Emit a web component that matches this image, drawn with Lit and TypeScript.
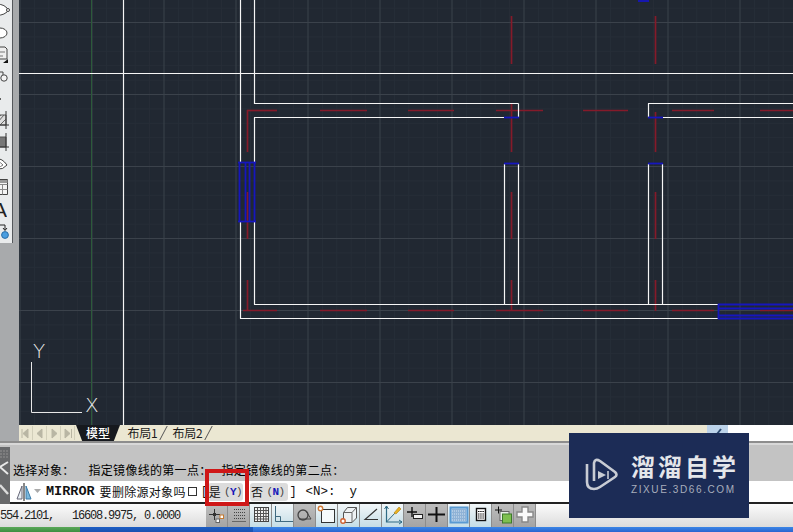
import { LitElement, css, html, svg } from 'lit'
import { customElement } from 'lit/decorators.js'

const WIDTH = 774
const HEIGHT = 425
const OX = 19 // canvas starts here in page coordinates

type Seg = [number, number, number, number]

// all in page coordinates, shifted by OX when drawn
const WHITE: Seg[] = [
  [19, 73.5, 793, 73.5],
  [123.5, 0, 123.5, 425],
  [240.5, 0, 240.5, 162],
  [240.5, 221, 240.5, 318.5],
  [254.5, 0, 254.5, 104],
  [254.5, 117.5, 254.5, 162],
  [254.5, 221, 254.5, 304.5],
  [254, 103.5, 518.5, 103.5],
  [254, 117.5, 504, 117.5],
  [518.5, 103.5, 518.5, 117.5],
  [504.5, 164, 504.5, 304.5],
  [518.5, 164, 518.5, 304.5],
  [648.5, 164, 648.5, 304.5],
  [662.5, 164, 662.5, 304.5],
  [648.5, 103.5, 648.5, 117.5],
  [648, 103.5, 793, 103.5],
  [663, 117.5, 793, 117.5],
  [254, 304.5, 718, 304.5],
  [240, 318.5, 718, 318.5],
]

const BLUE: Seg[] = [
  [239.5, 162, 239.5, 221],
  [245.5, 162, 245.5, 221],
  [249.5, 162, 249.5, 221],
  [254.5, 162, 254.5, 221],
  [238, 162.5, 256, 162.5],
  [238, 221.5, 256, 221.5],
  [504, 117.5, 519, 117.5],
  [504, 163.5, 519, 163.5],
  [648, 117.5, 663, 117.5],
  [648, 163.5, 663, 163.5],
  [638, 1, 649, 1],
  [718.5, 304, 718.5, 319],
  [718, 304.5, 793, 304.5],
  [718, 308.5, 793, 308.5],
  [718, 315.5, 793, 315.5],
  [718, 318.5, 793, 318.5],
]

const RED: Seg[] = [
  [511.5, 16, 511.5, 64],
  [655.5, 16, 655.5, 64],
  [511.5, 104, 511.5, 152],
  [655.5, 112, 655.5, 152],
  [511.5, 192, 511.5, 239],
  [655.5, 192, 655.5, 239],
  [511.5, 280, 511.5, 311],
  [655.5, 280, 655.5, 311],
  [247.5, 110, 247.5, 152],
  [247.5, 192, 247.5, 239],
  [247.5, 280, 247.5, 311],
  [247, 110.5, 277, 110.5],
  [320, 110.5, 367, 110.5],
  [408, 110.5, 454, 110.5],
  [496, 110.5, 543, 110.5],
  [583, 110.5, 628, 110.5],
  [672, 110.5, 714, 110.5],
  [760, 110.5, 793, 110.5],
  [243, 310.5, 277, 310.5],
  [320, 310.5, 367, 310.5],
  [408, 310.5, 454, 310.5],
  [496, 310.5, 543, 310.5],
  [583, 310.5, 628, 310.5],
  [672, 310.5, 714, 310.5],
  [760, 310.5, 793, 310.5],
]

const lines = (segs: Seg[], color: string, width = 1) =>
  segs.map(
    ([x1, y1, x2, y2]) =>
      svg`<line x1=${x1 - OX} y1=${y1} x2=${x2 - OX} y2=${y2} stroke=${color} stroke-width=${width} />`
  )

function gridLines() {
  const minor: Seg[] = []
  const major: Seg[] = []
  for (let i = -1; i < 56; i++) {
    const x = 19.6 + i * 14.4
    ;(i % 5 === 0 ? major : minor).push([x + 0.4, 0, x + 0.4, HEIGHT])
  }
  for (let i = -1; i < 31; i++) {
    const y = 22 + i * 14.4
    ;(i % 5 === 0 ? major : minor).push([19, y + 0.5, 793, y + 0.5])
  }
  return [...lines(minor, '#272e38'), ...lines(major, '#3b424b')]
}

const drawing = () => svg`
  ${gridLines()}
  <line x1=${91.5 - OX} y1="0" x2=${91.5 - OX} y2=${HEIGHT} stroke="#2c5a3a" />
  ${lines(RED, '#851a2a', 1.7)}
  ${lines(WHITE, '#f6f6f6', 1.2)}
  ${lines(BLUE, '#1616be', 1.8)}
  <path d="M${31.5 - OX} 362V412.5H${82 - OX}" fill="none" stroke="#e8e8e8" />
  <text class="ucs" x=${85 - OX} y="412">X</text>
  <text class="ucs" x=${33 - OX} y="358">Y</text>
`

const dockIcons = [
  svg`<path d="M-6 6Q1 2 7 8Q9 10 7 12Q1 17-6 14" fill="#fff" stroke="#444"/><circle cx="8" cy="10" r="1.5" fill="#fff" stroke="#444"/>`,
  svg`<ellipse cx="0" cy="11" rx="7" ry="5" fill="#fff" stroke="#444"/>`,
  svg`<path d="M-3 3H5L7 5V15H-3Z" fill="#eee" stroke="#444"/><path d="M0 8H5M0 12H3" stroke="#777"/><path d="M8 15V19H3Z" fill="#111"/>`,
  svg`<path d="M-3 6H3V12" fill="none" stroke="#444"/><circle cx="4" cy="12" r="3.2" fill="#f4f4f4" stroke="#444"/>`,
  svg`<circle cx="0" cy="11" r="1" fill="#333"/>`,
  svg`<path d="M-3 5H6V15H-3Z" fill="#ddd" stroke="#555"/><path d="M-3 13L4 5M0 15L6 9M-3 9L1 5" stroke="#666"/><path d="M6 1V19M-3 15H9" stroke="#333"/>`,
  svg`<path d="M-3 5H6V15H-3Z" fill="#777" stroke="#555"/><path d="M6 1V19M-3 15H9" stroke="#333"/>`,
  svg`<path d="M-3 5Q2 4 7 11Q3 16-3 15" fill="#fff" stroke="#444"/><path d="M-3 8Q1 8 3 11Q1 13-3 13" fill="#fff" stroke="#777"/>`,
  svg`<path d="M-2 3.5H7.5V18.5H-2Z" fill="#f4f4f4" stroke="#444"/><path d="M-2 8.5H7.5M-2 13.5H7.5M2.5 8.5V18.5" stroke="#888"/><path d="M-2 4H7.5V7H-2Z" fill="#999"/>`,
]

const statusIcons = [
  svg`<path d="M3 10.5H14M8.5 5V16" stroke="#333"/><rect x="7" y="9" width="3" height="3" fill="#333"/><rect x="14" y="11" width="3.5" height="3.5" fill="#fff" stroke="#c57a30"/><rect x="10" y="15" width="3.5" height="3.5" fill="#fff" stroke="#666"/>`,
  svg`<path d="M6 5.5H17M6 8.5H17M6 11.5H17M6 14.5H17" stroke="#444" stroke-dasharray="1 1"/><path d="M4 17.5H18" stroke="#666"/>`,
  svg`<rect x="4.5" y="3.5" width="14" height="14" fill="#f2f2f2" stroke="#444"/><path d="M7.5 4V17M10.5 4V17M13.5 4V17M16 4V17M5 6.5H18M5 9.5H18M5 12.5H18M5 15H18" stroke="#555"/>`,
  svg`<path d="M3.5 2V17.5H21" fill="none" stroke="#3f6a80"/><path d="M3.5 12.5H8.5V17.5" fill="none" stroke="#3f6a80"/>`,
  svg`<circle cx="9" cy="11" r="5" fill="none" stroke="#444" stroke-width="1.3"/><path d="M5 15H17L12 7" fill="none" stroke="#444"/>`,
  svg`<rect x="5.5" y="5.5" width="13" height="13" fill="#f6fafc" stroke="#333"/><circle cx="4.5" cy="4.5" r="2.2" fill="#fff" stroke="#d07a36" stroke-width="1.4"/>`,
  svg`<path d="M5.5 8.5L9.5 3.5H18.5V14L14 18.5H5.5Z" fill="#eef2f4" stroke="#555"/><path d="M5.5 8.5H14V18.5M14 8.5L18.5 3.5" fill="none" stroke="#666"/><circle cx="5" cy="17" r="2.2" fill="#fff" stroke="#d06030" stroke-width="1.4"/>`,
  svg`<path d="M17 5L5 15.5H18" fill="none" stroke="#333" stroke-width="1.1"/>`,
  svg`<path d="M4.5 2V18H20" fill="none" stroke="#2e6a84" stroke-width="1.2"/><path d="M4.5 18L14 8" stroke="#2e6a84"/><path d="M12 9L17 3L19 5L14 10Z" fill="#e8b020" stroke="#b08010" stroke-width=".6"/><path d="M2.5 5L4.5 2L6.5 5M17 16L20 18L17 20" fill="none" stroke="#2e6a84"/>`,
  svg`<path d="M3 8H13M8 3V13" stroke="#111" stroke-width="1.4"/><rect x="9.5" y="10.5" width="9" height="4" fill="#f4f4f4" stroke="#222"/>`,
  svg`<path d="M2 10.5H19" stroke="#111" stroke-width="2"/><path d="M10.5 3V18" stroke="#111" stroke-width="2"/>`,
  svg`<rect x="2.5" y="3.5" width="17" height="15" fill="#b8d4ee" stroke="#5a9ad2" stroke-width="2"/><path d="M4 5H18V17H4Z" fill="#8fb2d6"/><path d="M4 7H18M4 10H18M4 13H18M4 16H18" stroke="#d4e4f2" stroke-dasharray="1 1"/>`,
  svg`<rect x="6.5" y="4.5" width="9" height="12" fill="#fff" stroke="#111" stroke-width="1.4"/><path d="M8 7.5H14M8 10H14M8 12H14M8 14H14" stroke="#111" stroke-dasharray="1.5 .7"/>`,
  svg`<path d="M3 6H10M6.5 2.5V9.5" stroke="#111"/><rect x="8" y="7.5" width="9" height="9" fill="#e8f0e8" stroke="#666"/><rect x="10.5" y="10" width="9" height="9" fill="#7ec050" stroke="#3c7a2a"/>`,
  svg`<path d="M8 3H14V8H19V13H14V18H8V13H3V8H8Z" fill="#fafafa" stroke="#888" stroke-width="1.4"/>`,
]

// which status buttons are switched off (darker face)
const OFF = new Set([0, 1, 4, 9, 10, 13, 14])

@customElement('app-root')
export class AppRoot extends LitElement {
  static styles = css`
    :host {
      display: flex;
      flex-direction: column;
      position: relative;
      width: 793px;
      height: 532px;
      overflow: hidden;
      font-family: 'Liberation Mono', 'Noto Sans CJK SC', monospace;
      font-size: 12px;
      color: #111;
      background: #c3c3c3;
    }
    .top {
      display: flex;
      height: 441px;
    }
    .dock {
      width: 19px;
      flex: none;
      background: #a8aaac;
    }
    .tools {
      width: 12px;
      height: 243px;
      background: #e9ebec;
      border-right: 1px solid #55585c;
    }
    .tools svg {
      display: block;
      width: 12px;
      height: 22px;
      overflow: hidden;
    }
    .tools .letter {
      height: 22px;
      width: 7px;
      overflow: hidden;
      direction: rtl;
      font: 21px/24px 'Liberation Sans', sans-serif;
      color: #222;
    }
    .work {
      flex: 1;
      display: flex;
      flex-direction: column;
      min-width: 0;
    }
    .canvas {
      display: block;
      width: 774px;
      height: 425px;
      background: #212832;
    }
    .ucs {
      font: 200 20px 'DejaVu Sans', sans-serif;
      fill: #e8e8e8;
    }
    .tabs {
      flex: 1;
      display: flex;
      background: linear-gradient(90deg, #ebe7d2 0, #ebe7d2 688px, #fff 688px);
      font-family: 'Noto Sans CJK SC', sans-serif;
    }
    .nav {
      width: 14px;
      margin-top: 1px;
      height: 14px;
      flex: none;
    }
    .navs {
      display: flex;
      width: 57px;
      flex: none;
    }
    .tab {
      position: relative;
      width: 45px;
      flex: none;
      text-align: center;
      line-height: 15px;
      font-size: 12px;
      letter-spacing: -0.3px;
      color: #1c1c1c;
    }
    .tab::after {
      content: '';
      position: absolute;
      top: 1px;
      bottom: 1px;
      right: 1px;
      border-right: 1px solid #555;
      transform: skewX(-28deg);
    }
    .tab.on {
      color: #fff;
      font-weight: 500;
      letter-spacing: 0;
      background: #16191e;
      width: 44px;
      clip-path: polygon(0 0, 100% 0, 86% 100%, 14% 100%);
    }
    .tab.on::after {
      display: none;
    }
    .grow {
      flex: 1;
    }
    .scroll {
      width: 21px;
      flex: none;
      background: #bcd3ea;
    }
    .rest {
      width: 65px;
      flex: none;
    }
    .scroll svg,
    .nav svg {
      display: block;
    }
    .sep {
      height: 6px;
      flex: none;
      box-sizing: border-box;
      background: #c3c3c3;
      border-top: 2px solid #8d8d8d;
      box-shadow: inset 0 2px 0 #d8d8d8;
    }
    .cmd {
      display: flex;
      height: 57px;
      flex: none;
    }
    .handle {
      width: 10px;
      flex: none;
      background: #68696b;
      display: flex;
      flex-direction: column;
    }
    .handle svg {
      display: block;
    }
    .body {
      flex: 1;
      display: flex;
      flex-direction: column;
      min-width: 0;
    }
    .history {
      height: 34px;
      flex: none;
      display: flex;
      align-items: flex-end;
      padding: 0 0 3px 3px;
      box-sizing: border-box;
      font-family: 'Noto Sans CJK SC', sans-serif;
      letter-spacing: 0.3px;
      line-height: 17px;
      white-space: pre;
      color: #000;
    }
    .history span + span {
      margin-left: 14px;
    }
    .history span:last-child {
      margin-left: 10px;
    }
    .input {
      flex: 1;
      display: flex;
      align-items: center;
      background: #fff;
      border-bottom: 2px solid #222;
      white-space: pre;
      padding-left: 6px;
    }
    .input svg {
      flex: none;
    }
    .arrow {
      margin-left: 2px;
    }
    .name {
      font-weight: 700;
      font-size: 13.5px;
      margin-left: 5px;
    }
    .cjk {
      font-family: 'Noto Sans CJK SC', sans-serif;
      letter-spacing: 0.3px;
    }
    .msg {
      margin-left: 5px;
    }
    .box {
      width: 9px;
      height: 9px;
      margin-left: 2px;
      border: 1px solid #333;
      box-sizing: border-box;
    }
    .bracket {
      margin-left: 4px;
      width: 7px;
    }
    .opt {
      display: flex;
      align-items: center;
      height: 18px;
      background: #dcdcdc;
      border-radius: 3px;
      padding: 0 1px;
    }
    .opt + .opt {
      margin-left: 7px;
      padding-right: 4px;
    }
    .key {
      font-size: 11px;
      margin-left: 3px;
      letter-spacing: -0.6px;
      color: #444;
    }
    .key b {
      color: #1616b8;
    }
    .close {
      margin-left: 1px;
      width: 16px;
    }
    .tail {
      font-size: 12.5px;
      width: 44px;
    }
    .status {
      height: 23px;
      flex: none;
      display: flex;
      background: linear-gradient(#fbfbfb, #dcdcdc);
    }
    .coords {
      width: 206px;
      flex: none;
      line-height: 25px;
      font-size: 12px;
      letter-spacing: -1.2px;
      white-space: pre;
      color: #222;
    }
    .btn {
      width: 21px;
      flex: none;
      border-right: 1px solid #8c8c8c;
      background: linear-gradient(#f2f7f9, #c4dde6);
    }
    .btn.off {
      background: linear-gradient(#bdbdbd, #a4a4a4);
    }
    .btn svg {
      display: block;
    }
    .task {
      flex: 1;
      display: flex;
      background: linear-gradient(#3b86e6, #2a64d0);
    }
    .start {
      width: 80px;
      background: linear-gradient(#5aa858, #3e8e42);
    }
    .dark {
      width: 173px;
      background: linear-gradient(#1c5ec4, #1a50b0);
    }
    .flag {
      position: absolute;
      left: 205px;
      top: 469px;
      width: 44px;
      height: 37px;
      box-sizing: border-box;
      border: 4px solid #cf1717;
    }
    .logo {
      position: absolute;
      left: 569px;
      top: 433px;
      width: 180px;
      height: 85px;
      background: #1c2c56;
      color: #e4e6ea;
      font-family: 'Noto Sans CJK SC', sans-serif;
    }
    .logo svg {
      position: absolute;
      left: 14px;
      top: 24px;
    }
    .cn {
      position: absolute;
      left: 62px;
      top: 18px;
      font-size: 24px;
      font-weight: 700;
      line-height: 30px;
      letter-spacing: 3px;
      white-space: nowrap;
    }
    .url {
      position: absolute;
      left: 62px;
      top: 50px;
      font: 10px/14px 'Liberation Sans', sans-serif;
      letter-spacing: 1.6px;
      color: #a8aebc;
      white-space: nowrap;
    }
  `

  render() {
    return html`
      <div class="top">
        <div class="dock">
          <div class="tools">
            ${dockIcons.map((icon) => html`<svg viewBox="0 0 12 22">${icon}</svg>`)}
            <div class="letter">A</div>
            <svg viewBox="0 0 12 22">
              <path d="M-2 5H5V10M3 8L5 10.5L7 8" fill="none" stroke="#222" />
              <circle cx="5" cy="15" r="3.4" fill="#4a9ee0" stroke="#2a6ea8" />
            </svg>
          </div>
        </div>
        <div class="work">
          <svg class="canvas" viewBox="0 0 ${WIDTH} ${HEIGHT}">${drawing()}</svg>
          <div class="tabs">
            <div class="navs">
              ${['M9 3L4 7.5L9 12ZM3 3V12', 'M9 3L4 7.5L9 12Z', 'M5 3L10 7.5L5 12Z', 'M4 3L9 7.5L4 12ZM10.5 3V12'].map(
                (d) => html`<div class="nav">
                  <svg width="14" height="14" viewBox="0 0 14 14">
                    <path d=${d} fill="#b9b6a4" stroke="#b9b6a4" />
                    <path d="M13.5 0V14" stroke="#d2cfba" />
                  </svg>
                </div>`
              )}
            </div>
            <div class="tab on">模型</div>
            <div class="tab">布局1</div>
            <div class="tab">布局2</div>
            <div class="grow"></div>
            <div class="scroll">
              <svg width="21" height="15" viewBox="0 0 21 15"><path d="M6 14L14 4" stroke="#2c4a70" stroke-width="2" /></svg>
            </div>
            <div class="rest"></div>
          </div>
        </div>
      </div>
      <div class="sep"></div>
      <div class="cmd">
        <div class="handle">
          <svg width="10" height="14" viewBox="0 0 10 14">
            <path d="M0 4H8M0 7H8M0 10H8" stroke="#929292" stroke-dasharray="2 1" />
          </svg>
          <svg width="10" height="21" viewBox="0 0 10 21">
            <path d="M8 1L0 6L8 13" fill="none" stroke="#e8e8e8" stroke-width="2" />
          </svg>
          <svg width="10" height="20" viewBox="0 0 10 20">
            <path d="M0 3L8 12" stroke="#dcdcdc" stroke-width="2.4" />
          </svg>
        </div>
        <div class="body">
          <div class="history">
            <span>选择对象：</span><span>指定镜像线的第一点：</span><span>指定镜像线的第二点：</span>
          </div>
          <div class="input">
            <svg width="16" height="18" viewBox="0 0 16 18">
              <path d="M6 3L1 16H6Z" fill="#e8f0f4" stroke="#667" />
              <path d="M10 3L15 16H10Z" fill="#7ab8dc" stroke="#3a7aa8" />
              <path d="M8 0V18" stroke="#111" />
            </svg>
            <svg class="arrow" width="7" height="5" viewBox="0 0 7 5"><path d="M0 0H7L3.5 4Z" fill="#aaa" /></svg>
            <span class="name">MIRROR</span>
            <span class="cjk msg">要删除源对象吗</span>
            <span class="box"></span>
            <span class="bracket">[</span>
            <span class="opt"><span class="cjk">是</span><span class="key">(<b>Y</b>)</span></span>
            <span class="opt"><span class="cjk">否</span><span class="key">(<b>N</b>)</span></span>
            <span class="close">]</span>
            <span class="tail">&lt;N&gt;:</span>
            <span class="tail">y</span>
          </div>
        </div>
      </div>
      <div class="status">
        <div class="coords">554.2101,   16608.9975, 0.0000</div>
        ${statusIcons.map(
          (icon, i) => html`<div class="btn ${OFF.has(i) ? 'off' : ''}">
            <svg width="21" height="21" viewBox="0 0 21 21">${icon}</svg>
          </div>`
        )}
      </div>
      <div class="task">
        <div class="start"></div>
        <div class="dark"></div>
      </div>
      <div class="flag"></div>
      <div class="logo">
        <svg width="36" height="36" viewBox="0 0 36 36" fill="none" stroke="#c8ccd4" stroke-width="2.6">
          <path d="M4 7V25Q4 32 11 32Q14 32 17 30L32 20Q35 18 32 15L17 4Q12 1 11 6V24" stroke-linejoin="round" />
          <path d="M15 14L23 18L15 22Z" fill="#c8ccd4" stroke="none" />
          <path d="M25 14V22" stroke-width="1.6" />
        </svg>
        <div class="cn">溜溜自学</div>
        <div class="url">ZIXUE.3D66.COM</div>
      </div>
    `
  }
}
